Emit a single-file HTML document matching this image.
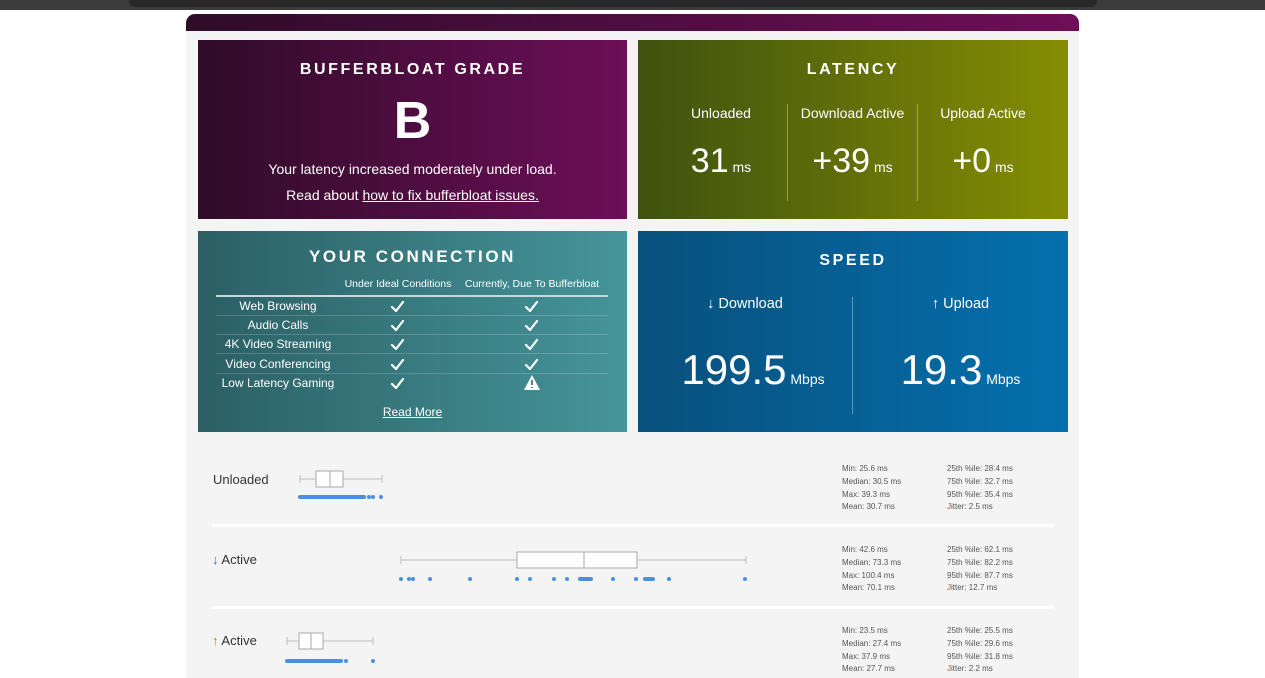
<!DOCTYPE html>
<html><head><meta charset="utf-8"><style>
*{margin:0;padding:0;box-sizing:border-box}
body{width:1265px;height:678px;background:#fff;font-family:"Liberation Sans",sans-serif;position:relative;overflow:hidden;color:#fff}
.a{position:absolute;white-space:nowrap}
.c{position:absolute;white-space:nowrap;text-align:center}
.card{position:absolute}
.h{font-weight:bold;letter-spacing:2.6px;font-size:16px}
.sl{position:absolute;font-size:8px;color:#555;line-height:12.8px;white-space:nowrap}
.dk{color:#333;font-size:13px}
</style></head><body>
<div class="a" style="left:0;top:0;width:1265px;height:10px;background:#3b3b3b"></div>
<div class="a" style="left:129px;top:0;width:968px;height:7px;background:#282828;border-radius:0 0 6px 6px"></div>
<div class="a" style="left:186px;top:14px;width:893px;height:17px;border-radius:9px 9px 0 0;background:linear-gradient(90deg,#2f0c28,#6e0e58)"></div>
<div class="a" style="left:186px;top:31px;width:893px;height:647px;background:#f4f4f4"></div>

<div class="card" style="left:198px;top:40px;width:429px;height:179px;background:linear-gradient(90deg,#2f0c28,#6d0e58)">
<div class="c h" style="left:0;width:429px;top:21px">BUFFERBLOAT GRADE</div>
<div class="c" style="left:0;width:429px;top:51px;font-size:52px;font-weight:bold">B</div>
<div class="c" style="left:0;width:429px;top:121px;font-size:14px">Your latency increased moderately under load.</div>
<div class="c" style="left:0;width:429px;top:147px;font-size:14px">Read about <u>how to fix bufferbloat issues.</u></div>
</div>

<div class="card" style="left:638px;top:40px;width:430px;height:179px;background:linear-gradient(90deg,#3e520f,#858d02)">
<div class="c h" style="left:0;width:430px;top:21px">LATENCY</div>
<div class="a" style="left:149px;top:64px;width:1px;height:97px;background:rgba(255,255,255,.35)"></div>
<div class="a" style="left:279px;top:64px;width:1px;height:97px;background:rgba(255,255,255,.35)"></div>
<div class="c" style="left:18px;width:130px;top:65px;font-size:14px">Unloaded</div>
<div class="c" style="left:150px;width:129px;top:65px;font-size:14px">Download Active</div>
<div class="c" style="left:280px;width:130px;top:65px;font-size:14px">Upload Active</div>
<div class="c" style="left:18px;width:130px;top:102px;font-size:34px">31<span style="font-size:14px"> ms</span></div>
<div class="c" style="left:150px;width:129px;top:102px;font-size:34px">+39<span style="font-size:14px"> ms</span></div>
<div class="c" style="left:280px;width:130px;top:102px;font-size:34px">+0<span style="font-size:14px"> ms</span></div>
</div>

<div class="card" style="left:198px;top:231px;width:429px;height:201px;background:linear-gradient(90deg,#2b5f64,#45959a)">
<div class="c h" style="left:0;width:429px;top:16px;font-size:17px">YOUR CONNECTION</div>
<div class="c" style="left:140px;width:120px;top:47px;font-size:10.5px">Under Ideal Conditions</div>
<div class="c" style="left:262px;width:144px;top:47px;font-size:10.5px">Currently, Due To Bufferbloat</div>
<div class="a" style="left:18px;top:64px;width:392px;height:2px;background:#c8d8d9"></div>
<div class="a" style="left:18px;top:84px;width:392px;height:1px;background:rgba(255,255,255,.18)"></div>
<div class="a" style="left:18px;top:103px;width:392px;height:1px;background:rgba(255,255,255,.18)"></div>
<div class="a" style="left:18px;top:122px;width:392px;height:1px;background:rgba(255,255,255,.18)"></div>
<div class="a" style="left:18px;top:142px;width:392px;height:1px;background:rgba(255,255,255,.18)"></div>
<div class="c" style="left:10px;width:140px;top:68px;font-size:12px">Web Browsing</div>
<div class="c" style="left:10px;width:140px;top:87px;font-size:12px">Audio Calls</div>
<div class="c" style="left:10px;width:140px;top:106px;font-size:12px">4K Video Streaming</div>
<div class="c" style="left:10px;width:140px;top:126px;font-size:12px">Video Conferencing</div>
<div class="c" style="left:10px;width:140px;top:145px;font-size:12px">Low Latency Gaming</div>
<svg class="a" style="left:0;top:0" width="429" height="201">
<g fill="none" stroke="#fff" stroke-width="2.2" stroke-linecap="round" stroke-linejoin="round">
<path d="M194 76l4 4 7-9M328 76l4 4 7-9"/>
<path d="M194 95l4 4 7-9M328 95l4 4 7-9"/>
<path d="M194 114l4 4 7-9M328 114l4 4 7-9"/>
<path d="M194 134l4 4 7-9M328 134l4 4 7-9"/>
<path d="M194 153l4 4 7-9"/>
</g>
<path d="M334 144l8 15h-16z" fill="#fff"/>
<path d="M334 149v5M334 156v1" stroke="#2f6a70" stroke-width="1.6"/>
</svg>
<div class="c" style="left:0;width:429px;top:174px;font-size:12px"><u>Read More</u></div>
</div>

<div class="card" style="left:638px;top:231px;width:430px;height:201px;background:linear-gradient(90deg,#08507c,#0470ae)">
<div class="c h" style="left:0;width:430px;top:21px">SPEED</div>
<div class="a" style="left:214px;top:66px;width:1px;height:117px;background:rgba(255,255,255,.35)"></div>
<div class="c" style="left:0;width:214px;top:65px;font-size:14.5px">↓ Download</div>
<div class="c" style="left:215px;width:215px;top:65px;font-size:14.5px">↑ Upload</div>
<div class="c" style="left:8px;width:214px;top:115px;font-size:42px">199.5<span style="font-size:14px"> Mbps</span></div>
<div class="c" style="left:215px;width:215px;top:115px;font-size:42px">19.3<span style="font-size:14px"> Mbps</span></div>
</div>

<div class="a dk" style="left:213px;top:472px">Unloaded</div>
<div class="a dk" style="left:212px;top:552px"><span style="color:#2a6fb0">↓</span> Active</div>
<div class="a dk" style="left:212px;top:633px"><span style="color:#c77a2a">↑</span> Active</div>
<div class="a" style="left:212px;top:524px;width:841px;height:3px;background:#fff"></div>
<div class="a" style="left:212px;top:606px;width:841px;height:3px;background:#fff"></div>
<svg class="a" style="left:0;top:0" width="1265" height="678">
<g stroke="#bbb" stroke-width="1" fill="none">
<path d="M300 479h16M343 479h39M300 475v8M382 475v8"/>
<rect x="316" y="471" width="27" height="16" fill="#fff" stroke="#aaa"/><path d="M330 471v16" stroke="#aaa"/>
<path d="M401 560h116M637 560h109M401 556v8M746 556v8"/>
<rect x="517" y="552" width="120" height="16" fill="#fff" stroke="#aaa"/><path d="M584 552v16" stroke="#aaa"/>
<path d="M287 641h12M323 641h50M287 637v8M373 637v8"/>
<rect x="299" y="633" width="24" height="16" fill="#fff" stroke="#aaa"/><path d="M311 633v16" stroke="#aaa"/>
</g>
<g fill="#4a90e2">
<rect x="298" y="495" width="68" height="4" rx="2"/><circle cx="369" cy="497" r="2"/><circle cx="373" cy="497" r="2"/><circle cx="381" cy="497" r="2"/>
<circle cx="401" cy="579" r="2"/><circle cx="409" cy="579" r="2"/><circle cx="413" cy="579" r="2"/><circle cx="430" cy="579" r="2"/><circle cx="470" cy="579" r="2"/><circle cx="517" cy="579" r="2"/><circle cx="530" cy="579" r="2"/><circle cx="554" cy="579" r="2"/><circle cx="567" cy="579" r="2"/><rect x="578" y="577" width="15" height="4" rx="2"/><circle cx="613" cy="579" r="2"/><circle cx="636" cy="579" r="2"/><rect x="643" y="577" width="12" height="4" rx="2"/><circle cx="669" cy="579" r="2"/><circle cx="745" cy="579" r="2"/>
<rect x="285" y="659" width="58" height="4" rx="2"/><circle cx="346" cy="661" r="2"/><circle cx="373" cy="661" r="2"/>
</g>
</svg>
<div class="sl" style="left:842px;top:463px">Min: 25.6 ms<br>Median: 30.5 ms<br>Max: 39.3 ms<br>Mean: 30.7 ms</div>
<div class="sl" style="left:947px;top:463px">25th %ile: 28.4 ms<br>75th %ile: 32.7 ms<br>95th %ile: 35.4 ms<br><span style="color:#b0602a">J</span>itter: 2.5 ms</div>
<div class="sl" style="left:842px;top:544px">Min: 42.6 ms<br>Median: 73.3 ms<br>Max: 100.4 ms<br>Mean: 70.1 ms</div>
<div class="sl" style="left:947px;top:544px">25th %ile: 62.1 ms<br>75th %ile: 82.2 ms<br>95th %ile: 87.7 ms<br><span style="color:#b0602a">J</span>itter: 12.7 ms</div>
<div class="sl" style="left:842px;top:625px">Min: 23.5 ms<br>Median: 27.4 ms<br>Max: 37.9 ms<br>Mean: 27.7 ms</div>
<div class="sl" style="left:947px;top:625px">25th %ile: 25.5 ms<br>75th %ile: 29.6 ms<br>95th %ile: 31.8 ms<br><span style="color:#b0602a">J</span>itter: 2.2 ms</div>
</body></html>
